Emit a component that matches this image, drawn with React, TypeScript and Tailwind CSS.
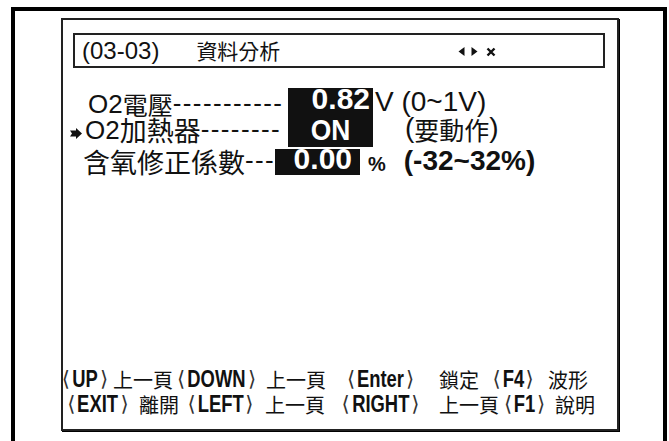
import React from "react";

const sans = '"Liberation Sans", Arial, "Noto Sans CJK TC", sans-serif';
const cjk = '"Noto Sans CJK TC", "Liberation Sans", sans-serif';
const br = '"DejaVu Sans", "Liberation Sans", sans-serif';

function L({ children }: { children: React.ReactNode }) {
  return <span className="whitespace-nowrap text-[20px] pl-[3px]" style={{ fontFamily: cjk }}>{children}</span>;
}
function K({ children, m }: { children: React.ReactNode; m: string }) {
  return (
    <span className="flex items-center justify-center gap-[2px] pr-[3px]">
      <span className="text-[21px] text-[#333]" style={{ fontFamily: br }}>⟨</span>
      <span className={`inline-block font-bold text-[23px] scale-x-80 whitespace-nowrap ${m}`} style={{ fontFamily: sans }}>{children}</span>
      <span className="text-[21px] text-[#333]" style={{ fontFamily: br }}>⟩</span>
    </span>
  );
}

export default function App() {
  return (
    <div className="w-[669px] h-[441px] bg-white overflow-hidden pt-[7px] pl-[11px]">
      <div className="w-[656px] h-[440px] border-[4px] border-b-0 border-black pl-[46px] pt-[7px]">
        <div className="w-[558px] h-[413px] border-2 border-[#222] shadow-[1px_1px_0_#000] flex flex-col pt-[13px] text-[#111]">
          {/* header */}
          <div className="ml-[10px] h-[35px] w-[532px] border-2 border-[#222] flex items-center leading-none">
            <span className="ml-[7px] text-[24px]" style={{ fontFamily: sans }}>(03-03)</span>
            <span className="ml-[37px] text-[21px]" style={{ fontFamily: cjk }}>資料分析</span>
            <span className="ml-[178px] mt-[2px] flex items-center">
              <svg width="7" height="9" viewBox="0 0 7 9"><polygon points="6.5,0 6.5,9 0.5,4.5" fill="#111" /></svg>
              <svg className="ml-[6px]" width="7" height="9" viewBox="0 0 7 9"><polygon points="0.5,0 0.5,9 6.5,4.5" fill="#111" /></svg>
              <svg className="ml-[8px]" width="10" height="10" viewBox="0 0 10 10"><path d="M1.5 1.5 L8.5 8.5 M8.5 1.5 L1.5 8.5" stroke="#111" strokeWidth="2.4" /></svg>
            </span>
          </div>

          {/* rows */}
          <div className="mt-[20px] flex flex-col leading-none">
            <div className="flex h-[29px] items-end">
              <span className="w-[25px] shrink-0" />
              <span className="w-[200px] shrink-0 flex items-end whitespace-nowrap">
                <span className="text-[26px]" style={{ fontFamily: sans }}>O2</span>
                <span className="text-[25px]" style={{ fontFamily: cjk }}>電壓</span>
                <span className="text-[26px] tracking-[1.4px] mb-[1px]" style={{ fontFamily: sans }}>-----------</span>
              </span>
              <span className="w-[85px] h-[29px] shrink-0 bg-[#111] text-white font-bold text-[30px] flex items-end justify-end pr-[3px] pb-[3px]" style={{ fontFamily: sans }}>0.82</span>
              <span className="ml-[2px] text-[28px] pb-[1px]" style={{ fontFamily: sans }}>V (0~1V)</span>
            </div>
            <div className="flex h-[30px] items-end">
              <span className="w-[22px] shrink-0 flex items-center h-[30px] pl-[7px] pt-[2px]">
                <svg width="12" height="11" viewBox="0 0 12 11"><polygon points="0,2.5 6,2.5 6,0 12,5.5 6,11 6,8.5 0,8.5 2,5.5" fill="#111" /></svg>
              </span>
              <span className="w-[203px] shrink-0 flex items-end whitespace-nowrap pb-[4px]">
                <span className="text-[26px]" style={{ fontFamily: sans }}>O2</span>
                <span className="text-[27px]" style={{ fontFamily: cjk }}>加熱器</span>
                <span className="text-[26px] tracking-[1.4px] mb-[1px]" style={{ fontFamily: sans }}>--------</span>
              </span>
              <span className="w-[85px] h-[30px] shrink-0 bg-[#111] text-white font-bold flex items-start justify-center" style={{ fontFamily: sans }}>
                <span className="inline-block text-[30px] scale-x-88 -mt-[2px]">ON</span>
              </span>
              <span className="ml-[32px] pb-[5px] flex items-end">
                <span className="text-[28px]" style={{ fontFamily: sans }}>(</span>
                <span className="text-[25px]" style={{ fontFamily: cjk }}>要動作</span>
                <span className="text-[28px]" style={{ fontFamily: sans }}>)</span>
              </span>
            </div>
            <div className="flex h-[26px] mt-[2px] items-end">
              <span className="w-[20px] shrink-0" />
              <span className="w-[192px] shrink-0 flex items-end whitespace-nowrap">
                <span className="text-[27px]" style={{ fontFamily: cjk }}>含氧修正係數</span>
                <span className="text-[26px] tracking-[1.4px] mb-[2px]" style={{ fontFamily: sans }}>---</span>
              </span>
              <span className="w-[85px] h-[26px] shrink-0 bg-[#111] text-white font-bold text-[30px] flex items-end justify-end pr-[8px] pb-[1px]" style={{ fontFamily: sans }}>0.00</span>
              <span className="ml-[8px] text-[20px] font-bold pb-[1px]" style={{ fontFamily: sans }}>%</span>
              <span className="ml-[18px] text-[28px] font-bold" style={{ fontFamily: sans }}>(-32~32%)</span>
            </div>
          </div>

          {/* footer */}
          <div className="mt-auto mb-[12px] flex flex-col leading-[25px]">
            <div className="grid grid-cols-[47px_63px_90px_65px_108px_48px_61px_53px] items-center">
              <K m="-mx-[3px]">UP</K><L>上一頁</L>
              <K m="-mx-[7px]">DOWN</K><L>上一頁</L>
              <K m="-mx-[6px]">Enter</K><L>鎖定</L>
              <K m="-mx-[3px]">F4</K><L>波形</L>
            </div>
            <div className="grid grid-cols-[73px_46px_80px_66px_108px_64px_52px_46px] items-center">
              <K m="-mx-[5px]">EXIT</K><L>離開</L>
              <K m="-mx-[6px]">LEFT</K><L>上一頁</L>
              <K m="-mx-[7px]">RIGHT</K><L>上一頁</L>
              <K m="-mx-[3px]">F1</K><L>說明</L>
            </div>
          </div>
        </div>
      </div>
    </div>
  );
}
